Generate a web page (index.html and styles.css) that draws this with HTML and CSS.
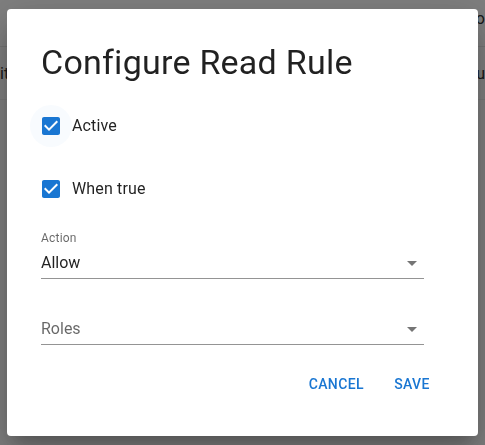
FILE: index.html
```html
<!DOCTYPE html>
<html lang="en">
<head>
<meta charset="utf-8">
<title>Configure Read Rule</title>
<link rel="stylesheet" href="styles.css">
</head>
<body>
<div class="page">
  <div class="page-toolbar"><span class="page-toolbar-text">Co</span></div>
  <div class="page-row">
    <span class="page-cell-left">items</span>
    <span class="page-cell-right">You</span>
  </div>
</div>

<div class="backdrop">
  <div class="dialog" role="dialog" aria-labelledby="dlg-title">
    <h2 class="dialog-title" id="dlg-title">Configure Read Rule</h2>

    <label class="check-row">
      <span class="check check-focused">
        <svg class="check-icon" viewBox="0 0 24 24" width="24" height="24"><path d="M19 3H5c-1.11 0-2 .9-2 2v14c0 1.1.89 2 2 2h14c1.11 0 2-.9 2-2V5c0-1.1-.89-2-2-2zm-9 14l-5-5 1.41-1.41L10 14.17l7.59-7.59L19 8l-9 9z"/></svg>
      </span>
      <span class="check-label">Active</span>
    </label>

    <label class="check-row check-row-second">
      <span class="check">
        <svg class="check-icon" viewBox="0 0 24 24" width="24" height="24"><path d="M19 3H5c-1.11 0-2 .9-2 2v14c0 1.1.89 2 2 2h14c1.11 0 2-.9 2-2V5c0-1.1-.89-2-2-2zm-9 14l-5-5 1.41-1.41L10 14.17l7.59-7.59L19 8l-9 9z"/></svg>
      </span>
      <span class="check-label">When true</span>
    </label>

    <div class="field field-action">
      <div class="field-label">Action</div>
      <div class="select">
        <span class="select-value">Allow</span>
        <svg class="select-arrow" viewBox="0 0 24 24" width="24" height="24"><path d="M7 10l5 5 5-5z"/></svg>
      </div>
    </div>

    <div class="field field-roles">
      <div class="select">
        <span class="select-placeholder">Roles</span>
        <svg class="select-arrow" viewBox="0 0 24 24" width="24" height="24"><path d="M7 10l5 5 5-5z"/></svg>
      </div>
    </div>

    <div class="actions">
      <button class="btn" type="button">Cancel</button>
      <button class="btn" type="button">Save</button>
    </div>
  </div>
</div>
</body>
</html>
```

FILE: styles.css
```css
html, body {
  margin: 0;
  padding: 0;
}

body {
  width: 485px;
  height: 445px;
  overflow: hidden;
  background: #ffffff;
  font-family: Roboto, "Liberation Sans", Arial, sans-serif;
  color: rgba(0, 0, 0, 0.87);
}

/* underlying page (mostly hidden by the dialog) */
.page {
  width: 485px;
}

.page-toolbar {
  height: 46px;
  border-bottom: 1px solid #e8e8e8;
  display: flex;
  justify-content: flex-end;
  align-items: flex-start;
}

.page-toolbar-text {
  font-size: 16px;
  line-height: 20px;
  margin-top: 9px;
  color: #333;
}

.page-row {
  height: 52px;
  border-bottom: 1px solid #f2f2f2;
  display: flex;
  justify-content: space-between;
  align-items: center;
  font-size: 16px;
  color: #333;
}

/* modal */
.backdrop {
  position: fixed;
  inset: 0;
  background: rgba(0, 0, 0, 0.5);
  display: flex;
  align-items: center;
  justify-content: center;
}

.dialog {
  width: 471px;
  box-sizing: border-box;
  background: #fff;
  border-radius: 4px;
  padding: 33px 34px 34px 34px;
  box-shadow: 0 11px 15px -7px rgba(0, 0, 0, 0.2),
              0 24px 38px 3px rgba(0, 0, 0, 0.14),
              0 9px 46px 8px rgba(0, 0, 0, 0.12);
  display: flex;
  flex-direction: column;
}

.dialog-title {
  margin: 0;
  font-size: 34px;
  line-height: 40px;
  font-weight: 400;
  letter-spacing: 0.25px;
  color: rgba(0, 0, 0, 0.87);
}

.check-row {
  display: flex;
  align-items: center;
  margin-left: -11px;
  margin-top: 23px;
  align-self: flex-start;
}

.check-row-second {
  margin-top: 21px;
}

.check {
  width: 42px;
  height: 42px;
  border-radius: 50%;
  display: flex;
  align-items: center;
  justify-content: center;
}

.check-focused {
  background: rgba(25, 118, 210, 0.03);
}

.check-icon {
  fill: #1976d2;
  display: block;
}

.check-label {
  font-size: 16px;
  line-height: 24px;
  letter-spacing: 0.15px;
  color: rgba(0, 0, 0, 0.87);
}

.field {
  width: 383px;
}

.field-action {
  margin-top: 20px;
}

.field-roles {
  margin-top: 38px;
}

.field-label {
  font-size: 12px;
  line-height: 16px;
  color: rgba(0, 0, 0, 0.6);
  letter-spacing: 0.2px;
  margin-bottom: 5px;
}

.select {
  display: flex;
  align-items: center;
  justify-content: space-between;
  border-bottom: 1px solid rgba(0, 0, 0, 0.42);
  padding-bottom: 3px;
  height: 24px;
}

.select-value {
  font-size: 16px;
  line-height: 24px;
  color: rgba(0, 0, 0, 0.87);
}

.select-placeholder {
  font-size: 16px;
  line-height: 24px;
  color: rgba(0, 0, 0, 0.6);
}

.select-arrow {
  fill: rgba(0, 0, 0, 0.54);
  display: block;
}

.actions {
  display: flex;
  justify-content: flex-end;
  gap: 8px;
  margin-top: 21px;
}

.btn {
  font-family: Roboto, "Liberation Sans", Arial, sans-serif;
  font-size: 14px;
  font-weight: 500;
  letter-spacing: 0.4px;
  text-transform: uppercase;
  color: #1976d2;
  background: transparent;
  border: none;
  border-radius: 4px;
  min-width: 64px;
  height: 36px;
  line-height: 36px;
  padding: 0 8px;
  cursor: pointer;
}
```
